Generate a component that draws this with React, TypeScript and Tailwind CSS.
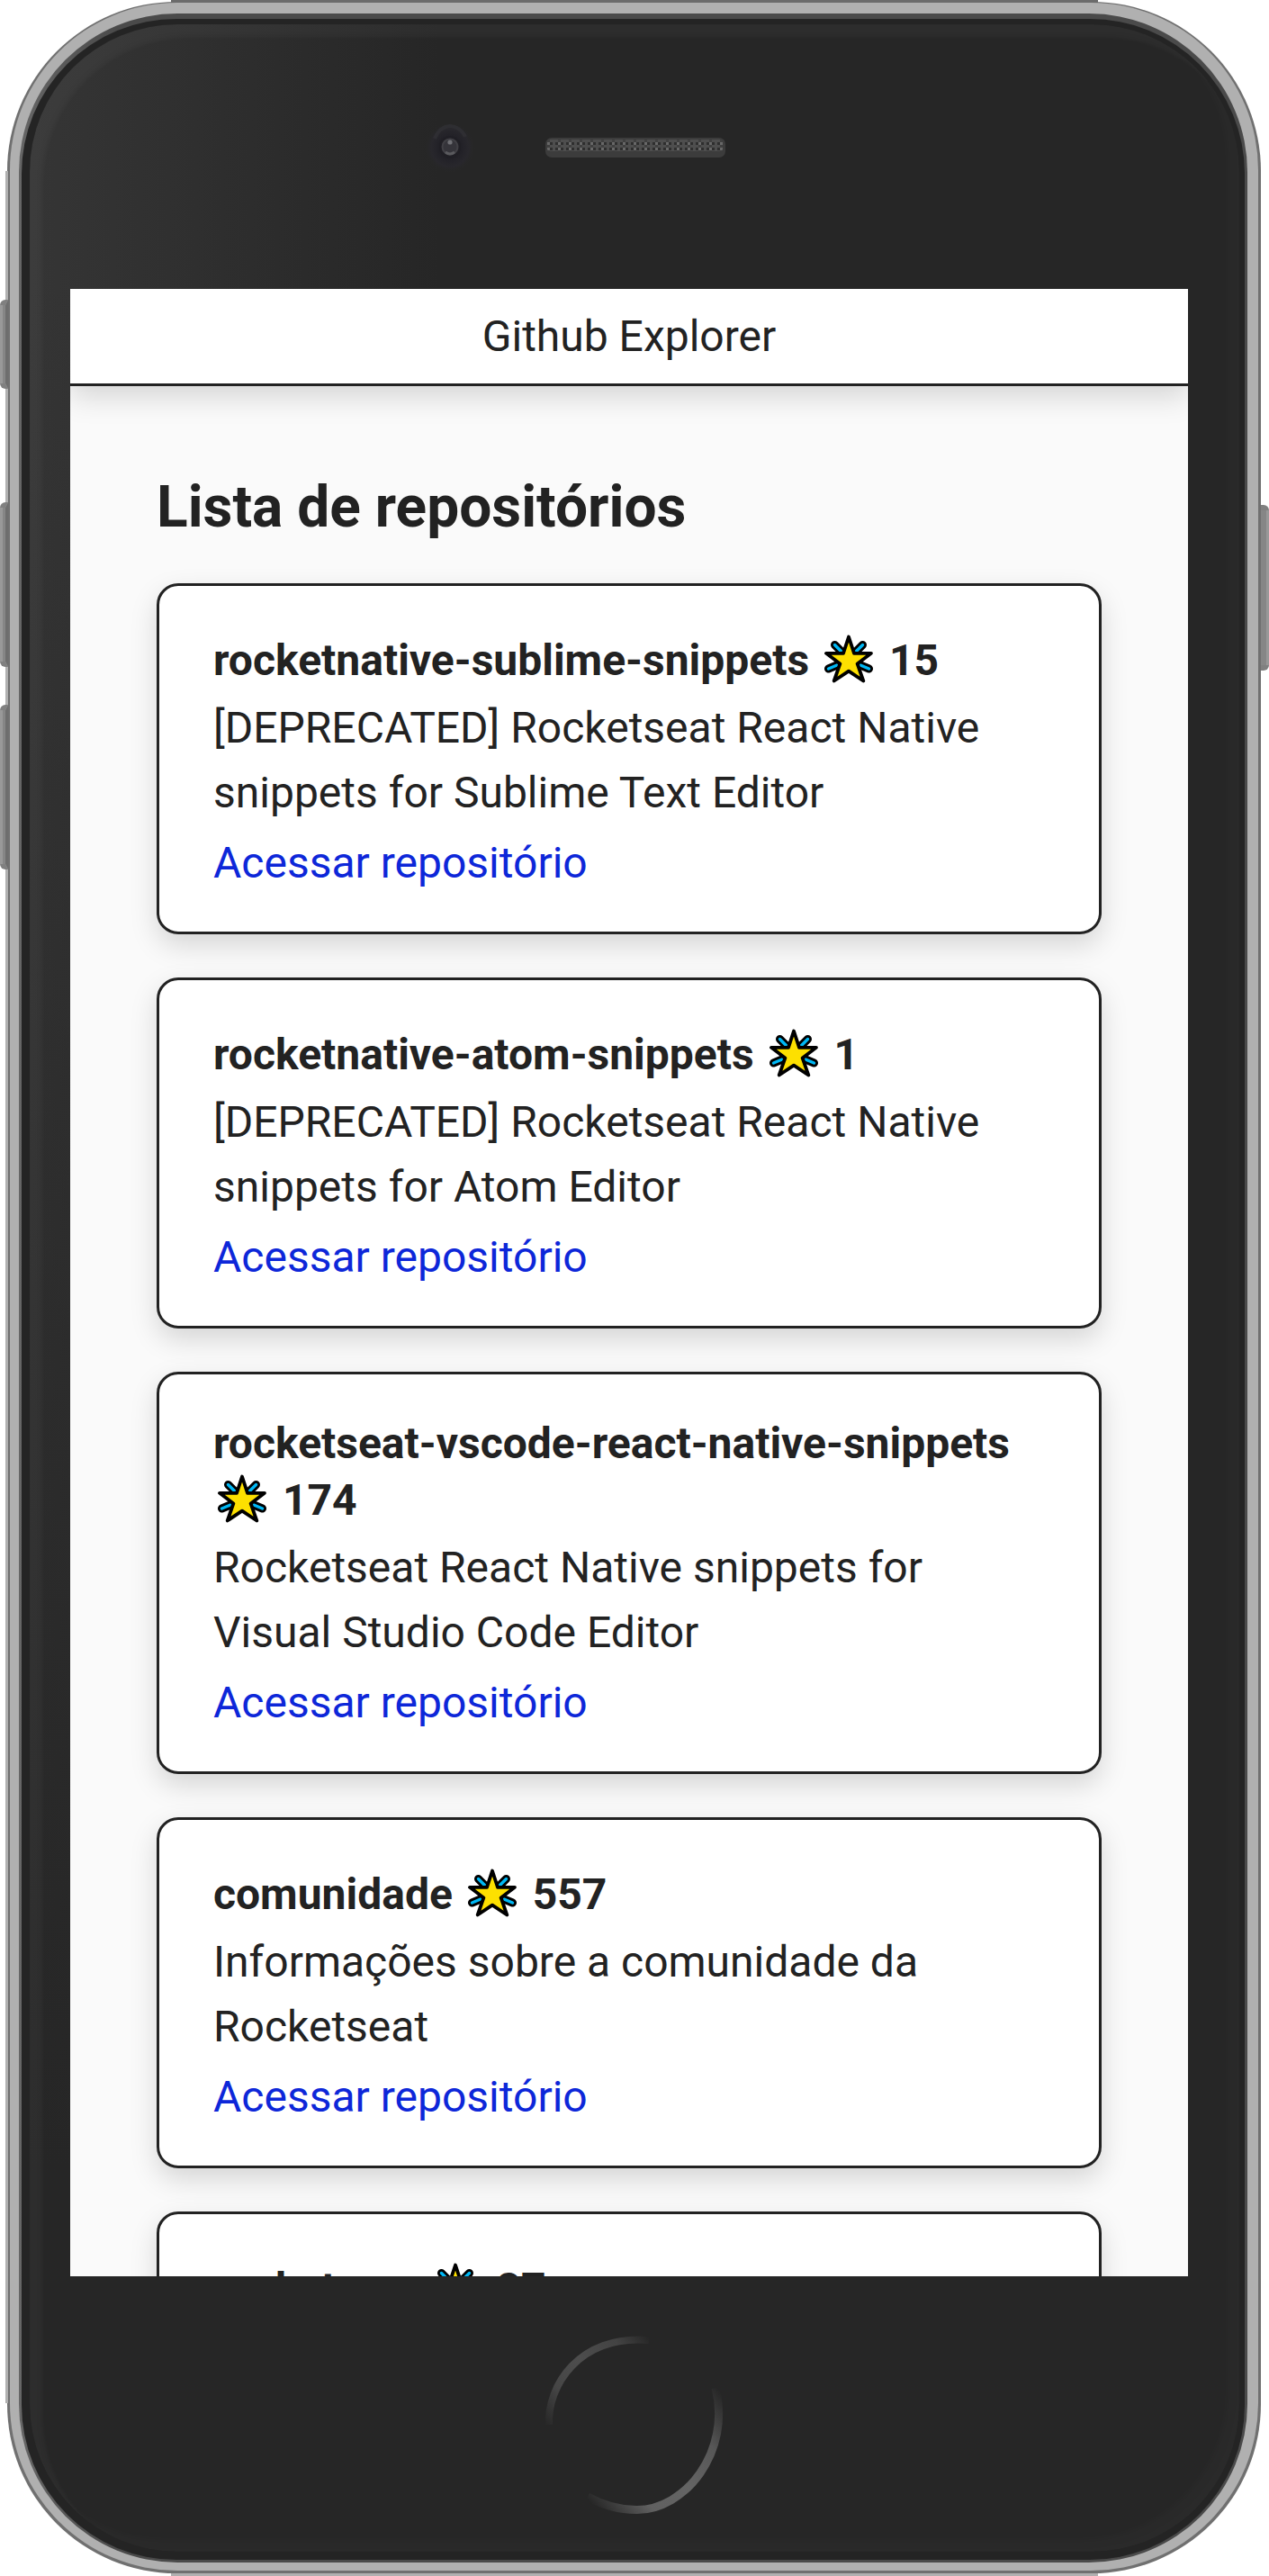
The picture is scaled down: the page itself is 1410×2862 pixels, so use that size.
import React from 'react';

type Repo = { name: string; stars: number; description: string };

const repos: Repo[] = [
  { name: 'rocketnative-sublime-snippets', stars: 15, description: '[DEPRECATED] Rocketseat React Native snippets for Sublime Text Editor' },
  { name: 'rocketnative-atom-snippets', stars: 1, description: '[DEPRECATED] Rocketseat React Native snippets for Atom Editor' },
  { name: 'rocketseat-vscode-react-native-snippets', stars: 174, description: 'Rocketseat React Native snippets for Visual Studio Code Editor' },
  { name: 'comunidade', stars: 557, description: 'Informações sobre a comunidade da Rocketseat' },
];

function Star() {
  return (
    <svg viewBox="0 0 54 54" fill="none" className="mr-[6px] ml-[5px] inline-block h-[54px] w-[54px] align-[-9px]">
      <g strokeLinecap="round">
        <path d="M11.5 11.5L19 19M42.5 11.5L35 19M4.5 38L14 34M49.5 38L40 34" stroke="#000" strokeWidth="9" />
        <path d="M11.5 11.5L19 19M42.5 11.5L35 19M4.5 38L14 34M49.5 38L40 34" stroke="#00b8f5" strokeWidth="3.4" />
      </g>
      <path d="M27 2.5L33 20.8L52 20.8L36.6 32.4L43.3 51.5L27 40.6L10.7 51.5L17.4 32.4L2 20.8L21 20.8Z" fill="#fde000" stroke="#000" strokeWidth="3.8" strokeLinejoin="round" />
    </svg>
  );
}

/* The star is taller than the text, so the line that holds it is 6px higher. */
function Title({ name, stars }: { name: string; stars: number }) {
  return (
    <strong className="block leading-[57px] font-bold">
      {name}{' '}
      <span className="inline-block h-[63px] pt-[6px] whitespace-nowrap">
        <Star /> {stars}
      </span>
    </strong>
  );
}

const cardClass = 'rounded-[24px] border-[3px] border-[#222] bg-white px-[60px] py-12 shadow-[0_12px_30px_rgba(0,0,0,0.15)]';

function RepoCard({ repo }: { repo: Repo }) {
  return (
    <li className={cardClass}>
      <Title name={repo.name} stars={repo.stars} />
      <p className="mt-[11px] mb-[13px] leading-[72px]">{repo.description}</p>
      <a className="block leading-[57px] text-[#0d27d9]">Acessar repositório</a>
    </li>
  );
}

function Screen() {
  return (
    <div className="ml-[54px] h-[2208px] w-[1242px] overflow-hidden bg-[#fafafa]">
      <header className="h-[108px] border-b-[3px] border-[#222] bg-white text-center leading-[105px] shadow-[0_12px_30px_rgba(0,0,0,0.15)]">Github Explorer</header>
      <main className="px-24 pt-[91px]">
        <h1 className="mb-[41px] text-[64px] leading-[87px] font-bold">Lista de repositórios</h1>
        <ul className="flex flex-col gap-12">
          {repos.map((r) => (
            <RepoCard key={r.name} repo={r} />
          ))}
          <li className={`${cardClass} h-[390px]`}>
            <Title name="rocketnow" stars={27} />
          </li>
        </ul>
      </main>
    </div>
  );
}

function TopBezel() {
  return (
    <div className="flex h-[300px] items-start pt-[111px] pl-[446px]">
      <svg viewBox="0 0 60 60" className="h-[60px] w-[60px]">
        <defs>
          <radialGradient id="lens">
            <stop offset="0.3" stopColor="#1d1c22" />
            <stop offset="0.5" stopColor="#232228" />
            <stop offset="0.75" stopColor="#28272c" />
            <stop offset="1" stopColor="#272727" stopOpacity="0" />
          </radialGradient>
        </defs>
        <circle cx="30" cy="32" r="28" fill="url(#lens)" />
        <path d="M13 22Q18 9 30 8Q42 9 47 20" fill="none" stroke="#323236" strokeWidth="4" opacity="0.7" />
        <circle cx="30" cy="31" r="12" fill="#201f25" />
        <circle cx="30" cy="31" r="8.5" fill="#35343a" stroke="#414045" strokeWidth="2" />
        <circle cx="30" cy="26" r="2.6" fill="#707075" />
        <path d="M25 37Q30 41 35 37" fill="none" stroke="#5a5a5e" strokeWidth="3" />
      </svg>
      <svg viewBox="0 0 202 24" className="mt-[20px] ml-[75px] h-6 w-[202px]">
        <defs>
          <pattern id="mesh" width="12" height="6" patternUnits="userSpaceOnUse">
            <rect width="12" height="6" fill="#4e4e4e" />
            <path d="M0 0h3v3H0zM6 0h3v3H6z" fill="#2e2e2e" />
            <path d="M3 0h3v3H3z" fill="#686868" />
            <path d="M3 3h3v3H3z" fill="#404040" />
          </pattern>
        </defs>
        <rect x="1" y="1" width="200" height="22" rx="7" fill="#3c3c3c" />
        <rect x="3" y="3" width="195" height="13" rx="3" fill="url(#mesh)" />
      </svg>
    </div>
  );
}

function HomeButton() {
  return (
    <svg viewBox="0 0 210 210" fill="none" className="mt-[60px] ml-[577px] h-[210px] w-[210px]">
      <defs>
        <linearGradient id="arcTop" x1="4" y1="105" x2="120" y2="8" gradientUnits="userSpaceOnUse">
          <stop stopColor="#262626" />
          <stop offset="0.25" stopColor="#464646" />
          <stop offset="0.5" stopColor="#4d4d4d" />
          <stop offset="0.8" stopColor="#434343" />
          <stop offset="1" stopColor="#262626" />
        </linearGradient>
        <linearGradient id="arcBottom" x1="196" y1="64" x2="52" y2="188" gradientUnits="userSpaceOnUse">
          <stop stopColor="#262626" />
          <stop offset="0.25" stopColor="#575757" />
          <stop offset="0.5" stopColor="#646464" />
          <stop offset="0.75" stopColor="#606060" />
          <stop offset="1" stopColor="#262626" />
        </linearGradient>
      </defs>
      <path d="M9 105C7 62 42 5 120 11" stroke="url(#arcTop)" strokeWidth="8" />
      <path d="M194 64C212 135 160 200 106 199.5C86 199.5 70 195 52 185" stroke="url(#arcBottom)" strokeWidth="9" />
    </svg>
  );
}

const sideButton = 'rounded-l-[6px] border-y-[6px] border-r-[3px] border-y-[#808080] border-r-[#6e6e6e] bg-[linear-gradient(to_right,#999_3px,#868686_3px)]';

export default function App() {
  return (
    <div className="relative flex h-[2862px] w-[1410px] overflow-hidden bg-white font-['Roboto',sans-serif] text-[48px] text-[#222]">
      <div className="z-10 mr-[-1px] flex w-[9px] flex-col pt-[333px]">
        <div className={`h-[99px] ${sideButton}`} />
        <div className={`mt-[126px] h-[183px] ${sideButton}`} />
        <div className={`mt-[42px] h-[183px] ${sideButton}`} />
      </div>

      <div className="mt-[2px] h-[2857px] w-[1393px] shrink-0 rounded-[188px] bg-[#707070] pt-px pr-[3px] pl-[3px]">
        <div className="h-[2853px] rounded-[186px] bg-[#b0b0b0] pt-3 pr-3 pl-[10px]">
          <div className="h-[2832px] rounded-[176px] bg-[linear-gradient(to_right,#666,#4a4a4a_8%)] pt-[6px] pr-[3px] pl-[3px]">
            <div className="relative flex h-[2823px] flex-col rounded-[172px] bg-[#242424]">
              <div className="absolute top-[6px] right-[6px] bottom-[9px] left-[9px] rounded-[164px] bg-[linear-gradient(to_bottom,transparent_10%,#262626_85%),linear-gradient(to_right,#353535,#2e2e2e_16%,#262626_34%)] shadow-[inset_14px_14px_5px_rgba(255,255,255,0.035),inset_-14px_-14px_10px_rgba(255,255,255,0.018)]" />
              <div className="relative">
                <TopBezel />
                <Screen />
                <HomeButton />
              </div>
            </div>
          </div>
        </div>
      </div>

      <div className="flex w-[9px] shrink-0 flex-col pt-[561px]">
        <div className="h-[184px] rounded-r-[6px] border-y-[6px] border-[#808080] bg-[linear-gradient(to_right,#868686_6px,#999_6px)]" />
      </div>

      <div className="absolute top-0 left-[190px] h-[3px] w-[1030px] bg-[#6b6b6b]" />
      <div className="absolute bottom-0 left-[190px] h-[3px] w-[1030px] bg-[#b0b0b0]" />
      <div className="absolute top-[190px] left-[6px] h-[2480px] w-[3px] bg-[#b0b0b0]" />
    </div>
  );
}
